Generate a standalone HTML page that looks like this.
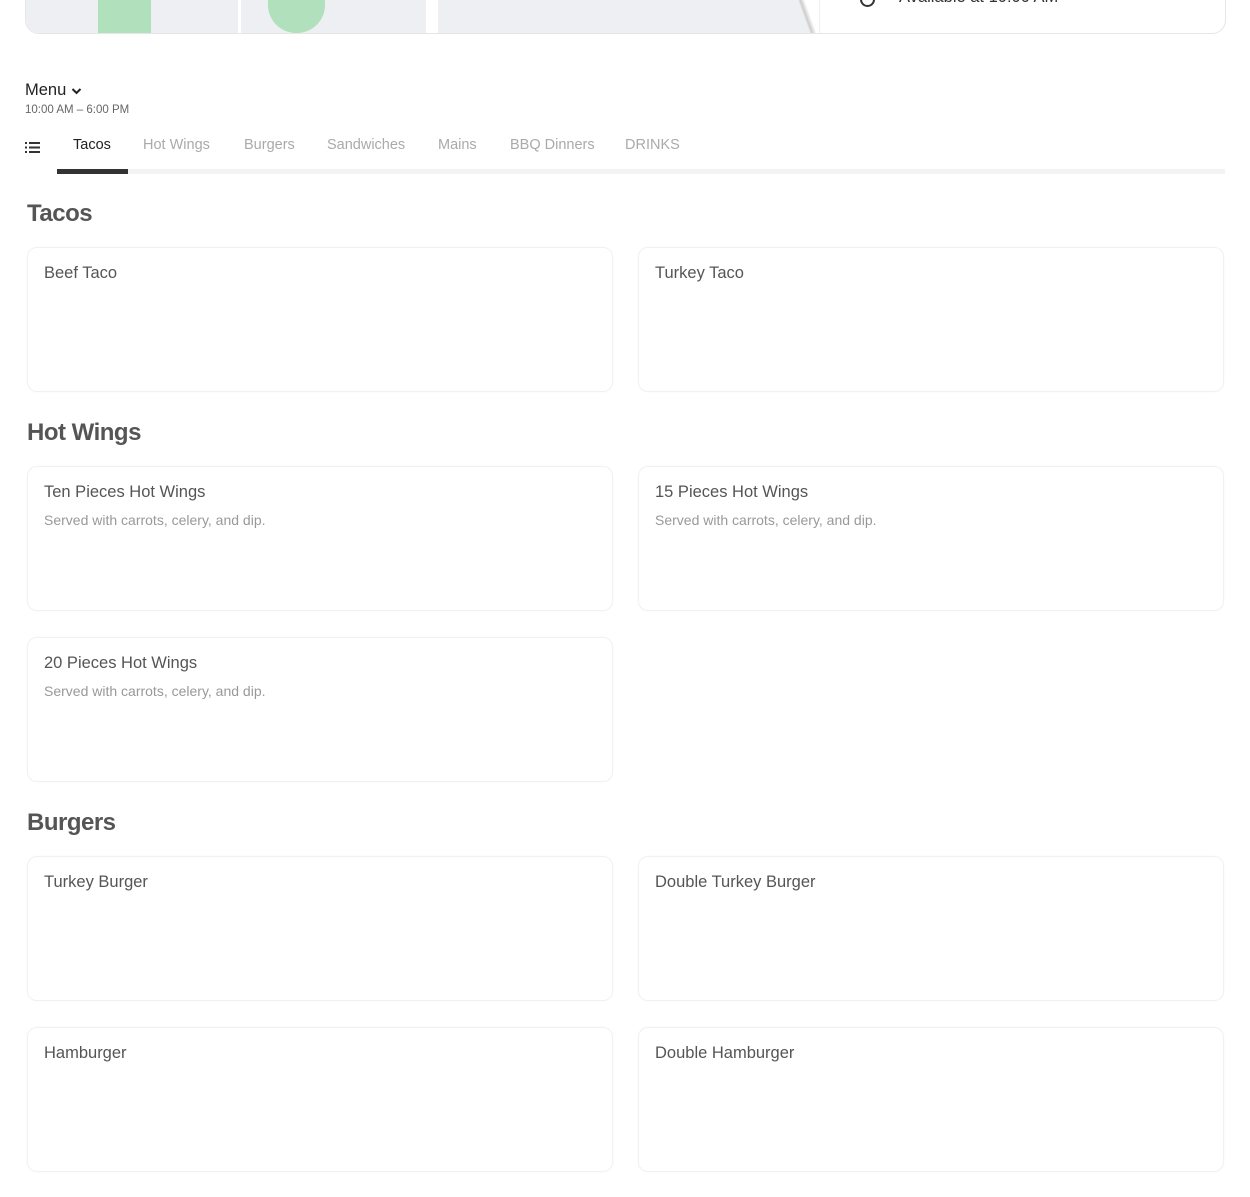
<!DOCTYPE html>
<html><head><meta charset="utf-8"><style>
body{margin:0;width:1250px;height:1197px;background:#fff;font-family:"Liberation Sans",sans-serif;position:relative;overflow:hidden;color:#444}
.a{position:absolute}
.card{position:absolute;width:586px;height:145px;border:1px solid #f1f1f1;border-radius:10px;box-sizing:border-box;box-shadow:0 0 2px rgba(0,0,0,.03)}
.card .t{position:absolute;left:16px;top:16px;font-size:16.5px;color:#555}
.card .d{position:absolute;left:16px;top:45px;font-size:14px;color:#999}
h2{position:absolute;margin:0;left:27px;font-size:24px;font-weight:bold;color:#555;letter-spacing:-0.5px}
.tab{position:absolute;top:137px;font-size:14.5px;color:#aaa}
</style></head><body>
<div class="a" style="left:25px;top:-20px;width:1199px;height:52px;border:1px solid #e6e6e6;border-radius:14px;overflow:hidden;background:#fff">
  <div class="a" style="left:0;top:0;width:794px;height:52px;background:#eeeff2"></div>
  <div class="a" style="left:72px;top:0;width:53px;height:52px;background:#b1e0bc"></div>
  <div class="a" style="left:242px;top:0;width:57px;height:52px;background:#b1e0bc;border-radius:0 0 28px 28px"></div>
  <div class="a" style="left:212px;top:0;width:3px;height:52px;background:#fff"></div>
  <div class="a" style="left:400px;top:0;width:12px;height:52px;background:#fff"></div>
  <div class="a" style="left:765px;top:0;width:28px;height:52px;background:linear-gradient(70deg,#eeeff2 40%,#ccc 45%,#fff 55%)"></div>
  <div class="a" style="left:834px;top:11px;width:11px;height:11px;border:2px solid #333;border-radius:50%"></div>
  <div class="a" style="left:873px;top:7px;font-size:16.5px;color:#333">Available at 10:00 AM</div>
  <div class="a" style="left:1167px;top:8px;font-size:12px;color:#333">⌄</div>
</div>
<div class="a" style="left:25px;top:81px;font-size:16.5px;color:#222">Menu <svg width="11" height="8" style="vertical-align:middle"><path d="M1.5 2 L5.5 6 L9.5 2" stroke="#222" stroke-width="2" fill="none"/></svg></div>
<div class="a" style="left:25px;top:104px;font-size:11.5px;color:#666">10:00 AM – 6:00 PM</div>
<svg class="a" style="left:25px;top:141px" width="16" height="13"><g fill="#333"><rect x="0" y="1" width="2" height="2"/><rect x="4" y="1" width="11" height="2"/><rect x="0" y="5.5" width="2" height="2"/><rect x="4" y="5.5" width="11" height="2"/><rect x="0" y="10" width="2" height="2"/><rect x="4" y="10" width="11" height="2"/></g></svg>
<div class="tab" style="left:73px;color:#222">Tacos</div>
<div class="tab" style="left:143px">Hot Wings</div>
<div class="tab" style="left:244px">Burgers</div>
<div class="tab" style="left:327px">Sandwiches</div>
<div class="tab" style="left:438px">Mains</div>
<div class="tab" style="left:510px">BBQ Dinners</div>
<div class="tab" style="left:625px">DRINKS</div>
<div class="a" style="left:57px;top:169px;width:1168px;height:5px;background:#f3f3f3"></div>
<div class="a" style="left:57px;top:169px;width:71px;height:5px;background:#333"></div>

<h2 style="top:200px">Tacos</h2>
<div class="card" style="left:27px;top:247px"><div class="t">Beef Taco</div></div>
<div class="card" style="left:638px;top:247px"><div class="t">Turkey Taco</div></div>

<h2 style="top:419px">Hot Wings</h2>
<div class="card" style="left:27px;top:466px"><div class="t">Ten Pieces Hot Wings</div><div class="d">Served with carrots, celery, and dip.</div></div>
<div class="card" style="left:638px;top:466px"><div class="t">15 Pieces Hot Wings</div><div class="d">Served with carrots, celery, and dip.</div></div>
<div class="card" style="left:27px;top:637px"><div class="t">20 Pieces Hot Wings</div><div class="d">Served with carrots, celery, and dip.</div></div>

<h2 style="top:809px">Burgers</h2>
<div class="card" style="left:27px;top:856px"><div class="t">Turkey Burger</div></div>
<div class="card" style="left:638px;top:856px"><div class="t">Double Turkey Burger</div></div>
<div class="card" style="left:27px;top:1027px"><div class="t">Hamburger</div></div>
<div class="card" style="left:638px;top:1027px"><div class="t">Double Hamburger</div></div>
</body></html>
